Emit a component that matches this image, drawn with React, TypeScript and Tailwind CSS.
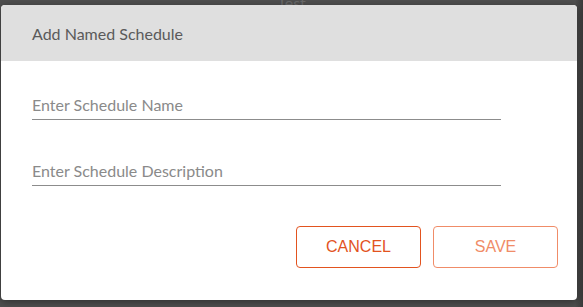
export default function App() {
  return (
    <div className="relative w-[583px] h-[307px] overflow-hidden bg-[#4f4f4f]">
      <div className="absolute left-0 right-0 -top-[9px] text-center text-[16px] text-[#6a6a6a] font-['Lato',sans-serif]">
        Test
      </div>
      <div className="absolute top-0 bottom-0 right-0 w-[8px] bg-gradient-to-r from-[#4f4f4f] to-[#3a3a3a]" />
      <div className="relative ml-[1px] mt-[5px] w-[576px] h-[295px] rounded-[4px] bg-white overflow-hidden shadow-[0_2px_8px_rgba(0,0,0,0.4)] font-['Lato',sans-serif]">
        <div className="h-[56px] bg-[#dfdfdf] flex items-center pl-[31px] pt-[1px] text-[16px] text-[#5a5a5a]">
          Add Named Schedule
        </div>
        <div className="pt-[28px] pl-[31px] pr-[19px]">
          <div className="flex flex-col gap-[35px] w-[469px]">
            <input
              placeholder="Enter Schedule Name"
              className="h-[31px] border-b border-[#8c8c8c] text-[16px] text-[#444] placeholder:text-[#8a8a8a] outline-none"
            />
            <input
              placeholder="Enter Schedule Description"
              className="h-[31px] border-b border-[#8c8c8c] text-[16px] text-[#444] placeholder:text-[#8a8a8a] outline-none"
            />
          </div>
          <div className="flex justify-end gap-[12px] mt-[40px]">
            <button className="w-[125px] h-[42px] rounded-[4px] border border-[#e2531f] text-[#e2531f] text-[16px] font-['Liberation_Sans',Arial,sans-serif]">
              CANCEL
            </button>
            <button className="w-[125px] h-[42px] rounded-[4px] border border-[#f08c68] text-[#f08c68] text-[16px] font-['Liberation_Sans',Arial,sans-serif]">
              SAVE
            </button>
          </div>
        </div>
      </div>
    </div>
  );
}
